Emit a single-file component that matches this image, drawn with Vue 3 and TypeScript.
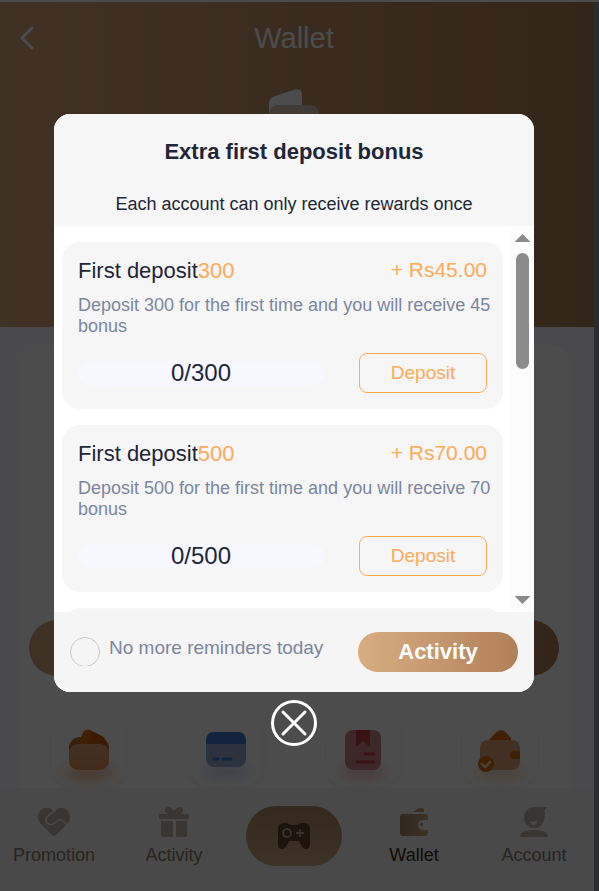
<script setup lang="ts">
import { ref } from 'vue'

interface Bonus {
  amount: number
  reward: number
}

const bonuses: Bonus[] = [
  { amount: 300, reward: 45 },
  { amount: 500, reward: 70 },
]

const open = ref(true)
const muted = ref(false)
</script>

<template>
  <div class="window">
    <div class="page">
      <header class="top">
        <div class="navbar">
          <button class="back" type="button" aria-label="Back">
            <svg width="14" height="24" viewBox="0 0 14 24" fill="none" stroke="#fff" stroke-width="2.8" stroke-linecap="round" stroke-linejoin="round">
              <path d="M12 2 2 12l10 10" />
            </svg>
          </button>
          <h1>Wallet</h1>
        </div>
        <svg class="purse" width="60" height="56" viewBox="0 0 60 56">
          <path d="M5 50V15q0-4 5-6.500L31 1.500q7-1.500 7 6v24z" fill="#fff" />
          <path d="M5 26q1-9 9-9h32q9 0 9 10v25H5z" fill="#dcc3af" />
        </svg>
      </header>

      <main class="content">
        <section class="card">
          <button class="recycle" type="button" aria-label="Transfer"></button>
          <nav class="shortcuts">
            <a class="tile" href="#deposit" aria-label="Deposit">
              <svg width="74" height="72" viewBox="0 0 74 72">
                <defs>
                  <filter id="soft" x="-50%" y="-120%" width="200%" height="340%"><feGaussianBlur stdDeviation="6" /></filter>
                  <linearGradient id="w1" x1="0" y1="0" x2="0" y2="1"><stop offset="0" stop-color="#dca578" /><stop offset="1" stop-color="#e08f58" /></linearGradient>
                </defs>
                <ellipse cx="37" cy="59" rx="25" ry="8" fill="#f2854a" opacity=".5" filter="url(#soft)" />
                <rect x="17" y="23" width="40" height="32" rx="11" fill="#b8682f" />
                <path d="M24 35 31 19q2-4 7-3l12 6q4 2 3 6v7z" fill="#c65f08" />
                <path d="M24 35 31 19q2-4 6-3l3 1-8 18z" fill="#d8700f" />
                <rect x="17" y="30" width="40" height="26" rx="9" fill="url(#w1)" />
              </svg>
            </a>
            <a class="tile" href="#withdraw" aria-label="Withdraw">
              <svg width="74" height="72" viewBox="0 0 74 72">
                <ellipse cx="37" cy="58" rx="24" ry="7" fill="#6e9ce9" opacity=".35" filter="url(#soft)" />
                <rect x="17" y="18" width="40" height="35" rx="8" fill="#94a9cf" />
                <path d="M17 30v-3q0-9 9-9h22q9 0 9 9v3z" fill="#3a76cc" />
                <path d="M25 45h4M34 45h8" stroke="#3a76cc" stroke-width="3" stroke-linecap="round" />
              </svg>
            </a>
            <a class="tile" href="#deposit-history" aria-label="Deposit history">
              <svg width="74" height="72" viewBox="0 0 74 72">
                <ellipse cx="37" cy="59" rx="24" ry="7" fill="#f45a66" opacity=".35" filter="url(#soft)" />
                <rect x="19" y="16" width="36" height="40" rx="8" fill="#d18389" />
                <path d="M30 16h14v17l-7-6-7 6z" fill="#bd3c47" />
                <path d="M39 40h9M31 48h17" stroke="#bd3c47" stroke-width="3" stroke-linecap="round" />
              </svg>
            </a>
            <a class="tile" href="#withdraw-history" aria-label="Withdrawal history">
              <svg width="74" height="72" viewBox="0 0 74 72">
                <ellipse cx="37" cy="59" rx="24" ry="7" fill="#f39b4c" opacity=".35" filter="url(#soft)" />
                <path d="M25 27 33 18.500q5-5 10 0l5 5.500v3z" fill="#d66c08" />
                <rect x="17" y="26" width="40" height="30" rx="8" fill="#dca575" />
                <path d="M57 37h-6q-4 0-4 4t4 4h6z" fill="#d66c08" />
                <circle cx="23" cy="50" r="8" fill="#d66c08" />
                <path d="m19 50 3 3 5-5" fill="none" stroke="#f0d6c0" stroke-width="2.6" stroke-linecap="round" stroke-linejoin="round" />
              </svg>
            </a>
          </nav>
        </section>
      </main>

      <nav class="tabbar">
        <a href="#promotion">
          <svg width="34" height="32" viewBox="0 0 34 32">
            <path d="M17 5Q10-1 4 4q-6 6-1 13l12 12q2 2 4 0l12-12q5-7-1-13-6-5-13 1z" fill="#bdb1a7" />
            <path d="m19 4-7 5q-5 4-2 8 4 4 9-1 4-4 7-1l4 4" fill="none" stroke="#f3f3f3" stroke-width="1.6" />
          </svg>
          <span>Promotion</span>
        </a>
        <a href="#activity">
          <svg width="32" height="32" viewBox="0 0 32 32" fill="#bdb1a7">
            <path d="M3 8h7Q5 5 8 2q3-3 8 3 5-6 8-3 3 3-2 6h7q2 0 2 1.500V13H1V9.500Q1 8 3 8z" />
            <path d="M3 15h12v16H5q-2 0-2-2zM18 15h11v14q0 2-2 2h-9z" />
          </svg>
          <span>Activity</span>
        </a>
        <a class="games" href="#games" aria-label="Games">
          <svg width="34" height="28" viewBox="0 0 34 28">
            <path d="M7 1h3l4 2h6l4-2h3q5 0 6 5v16q0 5-4 5-3 0-5-4l-2-4H12l-2 4q-2 4-5 4-4 0-4-5V6q1-5 6-5z" fill="#5f442d" />
            <circle cx="10" cy="11" r="4" fill="none" stroke="#c9a681" stroke-width="1.8" />
            <path d="M19 11h8M23 7v8" stroke="#c9a681" stroke-width="1.8" />
          </svg>
        </a>
        <a class="active" href="#wallet">
          <svg width="32" height="32" viewBox="0 0 32 32">
            <defs><linearGradient id="gold"><stop offset="0" stop-color="#a58768" /><stop offset="1" stop-color="#cba37c" /></linearGradient></defs>
            <path d="M15 6 20 2.500q5-2 6 1V6z" fill="#c39b74" />
            <path d="M5 8h22q3 0 3 3v3h-4q-6 0-6 5t6 5h4v3q0 3-3 3H5q-3 0-3-3V11q0-3 3-3z" fill="url(#gold)" />
            <circle cx="23.500" cy="18.500" r="1.800" fill="#c9a079" />
          </svg>
          <span>Wallet</span>
        </a>
        <a href="#account">
          <svg width="32" height="32" viewBox="0 0 32 32">
            <path d="M16 1h13l-3 4 1 1q0 16-11 16Q6 21 6 12 6 2 16 1z" fill="#bdb1a7" />
            <path d="M12 15q4 2 7-1 0 5-3 5t-4-4z" fill="#f3f3f3" />
            <path d="M2 30q1-6 14-6t14 6q0 1-2 1H4q-2 0-2-1z" fill="#bdb1a7" />
          </svg>
          <span>Account</span>
        </a>
      </nav>

      <div v-if="open" class="overlay">
        <section class="dialog" role="dialog" aria-labelledby="dialog-title">
          <header class="dialog-head">
            <h2 id="dialog-title">Extra first deposit bonus</h2>
            <p>Each account can only receive rewards once</p>
          </header>
          <div class="dialog-body">
            <div class="list">
              <article v-for="b in bonuses" :key="b.amount" class="bonus">
                <div class="row title-row">
                  <h3>First deposit<span>{{ b.amount }}</span></h3>
                  <strong>+ Rs{{ b.reward.toFixed(2) }}</strong>
                </div>
                <p>Deposit {{ b.amount }} for the first time and you will receive {{ b.reward }} bonus</p>
                <div class="row">
                  <div class="progress">0/{{ b.amount }}</div>
                  <button class="deposit" type="button">Deposit</button>
                </div>
              </article>
              <div class="bonus pending"></div>
            </div>
            <div class="scrollbar" aria-hidden="true">
              <i class="arrow up"></i>
              <div class="track"><i class="thumb"></i></div>
              <i class="arrow down"></i>
            </div>
          </div>
          <footer class="dialog-foot">
            <label>
              <span class="tick"><input v-model="muted" type="checkbox" /></span>
              <span class="tick-text">No more reminders today</span>
            </label>
            <button class="go" type="button">Activity</button>
          </footer>
        </section>
        <button class="close" type="button" aria-label="Close" @click="open = false">
          <svg width="46" height="46" viewBox="0 0 46 46" fill="none" stroke="#fff" stroke-width="3" stroke-linecap="round">
            <circle cx="23" cy="23" r="21.500" />
            <path d="m12 12 22 22M34 12 12 34" />
          </svg>
        </button>
      </div>
    </div>
  </div>
</template>

<style>
body {
  background: #2b2c31;
}
</style>

<style scoped>
.window {
  display: flex;
  box-sizing: border-box;
  height: 100vh;
  padding: 2px 5px 0 0;
  overflow: hidden;
  background: linear-gradient(#494b4d 2px, #2b2c31 2px);
  font-family: "Liberation Sans", Arial, sans-serif;
  color: #1e2637;
}
h1, h2, h3, p {
  margin: 0;
  font-weight: 400;
}
button {
  padding: 0;
  border: 0;
  background: none;
  font-family: inherit;
  cursor: pointer;
}
svg {
  display: block;
}
a {
  text-decoration: none;
}
.page {
  position: relative;
  display: flex;
  flex: 1;
  flex-direction: column;
  min-width: 0;
  margin-left: -6px;
  background: #f7f8ff;
}
.top {
  display: flex;
  flex: none;
  flex-direction: column;
  align-items: center;
  height: 325px;
  background: linear-gradient(90deg, #d9a77d, #af7d55);
}
.navbar {
  display: grid;
  grid-template-columns: 72px 1fr 72px;
  align-items: center;
  align-self: stretch;
  height: 72px;
}
.back {
  justify-self: start;
  margin-left: 26px;
}
h1 {
  font-size: 29px;
  line-height: 36px;
  text-align: center;
  color: #fff;
}
.purse {
  margin-top: 14px;
}
.content {
  display: flex;
  flex: 1;
  min-height: 0;
  padding: 18px 24px 0;
  overflow: hidden;
}
.card {
  flex: 1;
  height: 500px;
  padding: 275px 2px 0;
  box-sizing: border-box;
  border-radius: 18px;
  background: #fff;
}
.recycle {
  display: block;
  width: calc(100% - 18px);
  height: 56px;
  margin: 0 9px;
  border-radius: 28px;
  background: linear-gradient(90deg, #d9a77d, #af7d55);
}
.shortcuts {
  display: grid;
  grid-template-columns: repeat(4, 1fr);
  justify-items: center;
  margin-top: 38px;
}
.tile {
  border-radius: 20px;
  box-shadow: 0 2px 6px rgba(150, 150, 180, 0.16);
}
.tabbar {
  display: grid;
  flex: none;
  grid-template-columns: repeat(5, 1fr);
  justify-items: center;
  height: 103px;
  box-sizing: border-box;
  padding-top: 18px;
  background: #f3f3f3;
}
.tabbar a {
  display: flex;
  flex-direction: column;
  align-items: center;
  gap: 6px;
  font-size: 18px;
  line-height: 22px;
  color: #857c74;
}
.tabbar a.active {
  color: #3f2a10;
}
.tabbar a.games {
  justify-content: center;
  width: 96px;
  height: 60px;
  border-radius: 30px;
  background: linear-gradient(#b08963, #cba881);
}
.overlay {
  position: absolute;
  inset: 0;
  display: flex;
  flex-direction: column;
  align-items: center;
  gap: 8px;
  padding-top: 112px;
  background: rgba(0, 0, 0, 0.7);
}
.dialog {
  width: 80%;
  overflow: hidden;
  border-radius: 16px;
  background: #fff;
}
.dialog-head {
  display: flex;
  flex-direction: column;
  gap: 28px;
  padding: 24px 16px 12px;
  background: #f6f6f6;
  text-align: center;
}
.dialog-head h2 {
  font-size: 22px;
  font-weight: 700;
  line-height: 28px;
}
.dialog-head p {
  font-size: 18px;
  line-height: 20px;
}
.dialog-body {
  display: flex;
  height: 386px;
}
.list {
  display: flex;
  flex: 1;
  flex-direction: column;
  gap: 16px;
  box-sizing: border-box;
  padding: 16px 8px;
  overflow-y: auto;
  scrollbar-width: none;
}
.bonus {
  flex: none;
  padding: 16px;
  border-radius: 18px;
  background: #f6f6f6;
}
.pending {
  height: 135px;
}
.row {
  display: flex;
  align-items: center;
  justify-content: space-between;
}
.title-row {
  align-items: flex-start;
}
.bonus h3 {
  font-size: 22px;
  line-height: 25px;
}
.bonus h3 span,
.bonus strong {
  color: #feaa57;
}
.bonus strong {
  font-size: 21px;
  font-weight: 400;
  line-height: 24px;
}
.bonus p {
  margin: 12px -8px 16px 0;
  font-size: 18px;
  line-height: 21px;
  color: #7c869d;
}
.progress {
  flex: 1;
  margin-right: 35px;
  border-radius: 12px;
  background: #f6f7ff;
  font-size: 24px;
  line-height: 24px;
  text-align: center;
}
.deposit {
  width: 128px;
  height: 40px;
  border: 1px solid #feaa57;
  border-radius: 8px;
  font-size: 19px;
  color: #feaa57;
}
.scrollbar {
  display: flex;
  flex-direction: column;
  align-items: center;
  gap: 11px;
  width: 23px;
  box-sizing: border-box;
  padding: 8px 0;
  background: #fcfcfc;
}
.track {
  flex: 1;
}
.thumb {
  display: block;
  width: 13px;
  height: 35%;
  border-radius: 7px;
  background: #8b8b8b;
}
.arrow {
  width: 16px;
  height: 8px;
  background: #8b8b8b;
}
.up {
  clip-path: polygon(50% 0, 100% 100%, 0 100%);
}
.down {
  clip-path: polygon(0 0, 100% 0, 50% 100%);
}
.dialog-foot {
  display: flex;
  align-items: center;
  justify-content: space-between;
  height: 80px;
  padding: 0 16px;
  background: #f5f5f5;
}
.dialog-foot label {
  display: flex;
  align-items: flex-start;
  gap: 9px;
  font-size: 19px;
  line-height: 22px;
  color: #7c869d;
}
.tick {
  height: 29px;
  overflow: hidden;
}
.tick input {
  display: block;
  width: 30px;
  height: 30px;
  margin: 0;
  border: 1px solid #c8c9cc;
  border-radius: 50%;
  appearance: none;
}
.tick input:checked {
  background: #d9a77d;
}
.tick-text {
  padding-bottom: 8px;
}
.go {
  width: 160px;
  height: 40px;
  border-radius: 20px;
  background: linear-gradient(90deg, #d9ad82, #b08058);
  font-size: 22px;
  font-weight: 700;
  color: #fff;
}
</style>
